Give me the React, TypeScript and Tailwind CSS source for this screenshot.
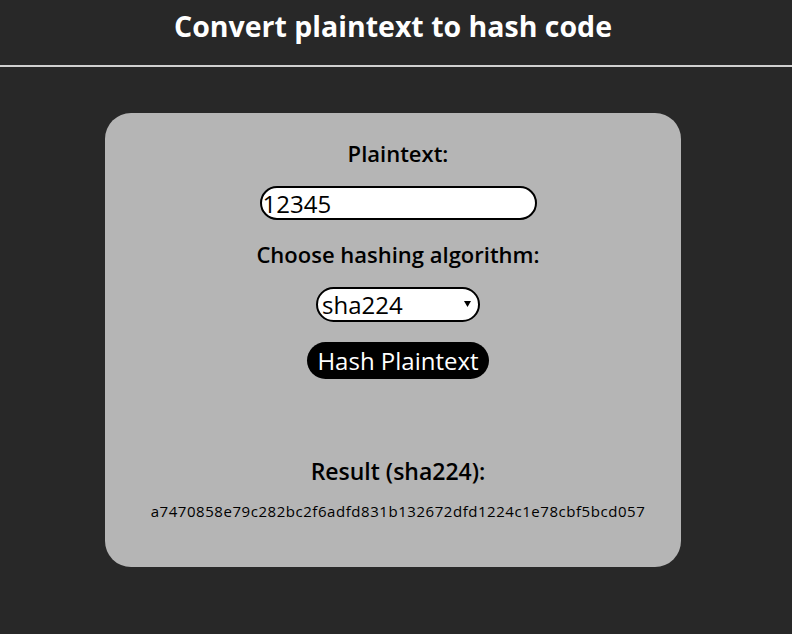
import { useState } from 'react'

const HASH = 'a7470858e79c282bc2f6adfd831b132672dfd1224c1e78cbf5bcd057'

export default function App() {
  const [text, setText] = useState('12345')
  const [algo, setAlgo] = useState('sha224')

  return (
    <div
      className="min-h-[634px] bg-[#282828] text-black"
      style={{ fontFamily: '"Open Sans", "Liberation Sans", sans-serif' }}
    >
      <header className="h-[67px] border-b-2 border-[#d0d0d0] flex justify-center pt-[6px] pr-[6px]">
        <h1 className="text-[28.5px] leading-[40px] font-bold text-white">
          Convert plaintext to hash code
        </h1>
      </header>

      <div className="flex justify-center pt-[46px] pr-[6px]">
        <div className="w-[576px] h-[454px] bg-[#b5b5b5] rounded-[26px] flex flex-col items-center pt-[25px] pl-[10px]">
          <label className="text-[22px] font-semibold leading-[30px]">Plaintext:</label>

          <input
            value={text}
            onChange={(e) => setText(e.target.value)}
            className="mt-[18px] w-[277px] h-[34px] bg-white border-2 border-black rounded-full px-[1px] text-[24px] leading-none outline-none"
          />

          <label className="mt-[19px] text-[22px] font-semibold leading-[30px]">
            Choose hashing algorithm:
          </label>

          <div className="relative mt-[18px]">
            <select
              value={algo}
              onChange={(e) => setAlgo(e.target.value)}
              className="block appearance-none w-[164px] h-[35px] bg-white border-2 border-black rounded-full pl-[4px] text-[24px] leading-none outline-none"
            >
              <option value="md5">md5</option>
              <option value="sha1">sha1</option>
              <option value="sha224">sha224</option>
              <option value="sha256">sha256</option>
              <option value="sha512">sha512</option>
            </select>
            <svg className="absolute right-[9px] top-[14px] pointer-events-none" width="7" height="6" viewBox="0 0 7 6">
              <path d="M0 0h7L3.5 6z" fill="#000" />
            </svg>
          </div>

          <button className="mt-[20px] h-[37px] px-[10px] bg-black text-white rounded-full text-[24px] leading-none">
            Hash Plaintext
          </button>

          <h2 className="mt-[77px] text-[23px] font-semibold leading-[30px]">Result ({algo}):</h2>
          <p className="mt-[15px] text-[15px] leading-[20px] tracking-[0.55px]">{HASH}</p>
        </div>
      </div>
    </div>
  )
}
